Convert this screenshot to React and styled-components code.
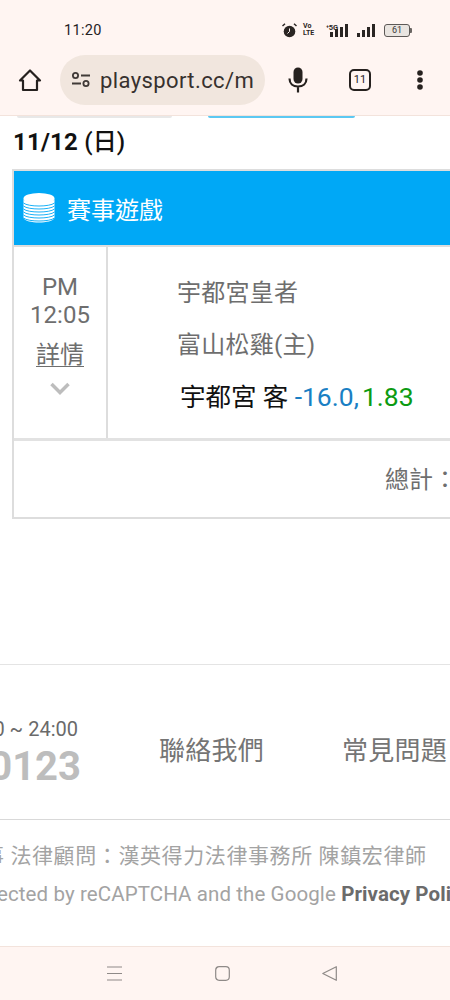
import React from "react"
import styled, { createGlobalStyle } from "styled-components"

const GlobalStyle = createGlobalStyle`
  html, body {
    margin: 0;
    padding: 0;
    background: #fff;
  }
  body {
    font-family: Roboto, "Noto Sans CJK TC", sans-serif;
  }
  * {
    box-sizing: border-box;
  }
`

const Screen = styled.div`
  width: 450px;
  height: 1000px;
  overflow: hidden;
  display: flex;
  flex-direction: column;
`

const Chrome = styled.header`
  height: 116px;
  flex: none;
  background: #fff5f2;
  border-bottom: 1px solid #f3e3dc;
`

const StatusBar = styled.div`
  height: 55px;
  padding: 21px 38px 0 64px;
  display: flex;
  align-items: flex-start;
  justify-content: space-between;
`

const Clock = styled.span`
  margin-top: 1px;
  font-size: 14.5px;
  line-height: 18px;
  letter-spacing: 0.3px;
  color: #26211f;
`

const StatusIcons = styled.div`
  display: flex;
  align-items: center;
  height: 18px;
  color: #2a2523;
`

const VoLte = styled.span`
  width: 16px;
  margin: 0 7px 0 6px;
  font-size: 7px;
  line-height: 7px;
  font-weight: 700;
  color: #2a2523;
`

const NetworkGroup = styled.div`
  position: relative;
  width: 24px;
  height: 13px;
  display: flex;
  justify-content: flex-end;
`

const FiveG = styled.span`
  position: absolute;
  left: 0;
  top: 0;
  font-size: 7.5px;
  font-weight: 700;
  line-height: 7px;
  letter-spacing: -0.2px;
`

const MobileBars = styled.span`
  margin-left: 7px;
  display: flex;
`

const Battery = styled.span`
  width: 26px;
  height: 13px;
  margin-left: 7px;
  border: 1px solid #5d5856;
  border-radius: 3px;
  background: #e9e4e0;
  color: #3c3735;
  font-size: 9px;
  line-height: 11px;
  text-align: center;
`

const BatteryTip = styled.span`
  width: 2px;
  height: 5px;
  background: #6b6663;
  border-radius: 0 1px 1px 0;
`

const Toolbar = styled.div`
  height: 50px;
  padding-left: 18px;
  display: flex;
  align-items: center;
`

const AddressPill = styled.div`
  width: 205px;
  height: 50px;
  margin-left: 18px;
  padding-left: 11px;
  border-radius: 25px;
  background: #f1e6de;
  display: flex;
  align-items: center;
  gap: 9px;
  overflow: hidden;
`

const AddressText = styled.span`
  font-size: 22px;
  letter-spacing: 0.4px;
  color: #37312e;
  white-space: nowrap;
`

const ToolButton = styled.div`
  flex: none;
  display: flex;
  align-items: center;
  justify-content: center;
  margin-left: ${(props) => props.$gap}px;
`

const TabCount = styled.span`
  width: 22px;
  height: 22px;
  border: 2px solid #26211f;
  border-radius: 5px;
  font-size: 11px;
  line-height: 18px;
  text-align: center;
  color: #26211f;
`

const Content = styled.main`
  flex: 1;
  min-height: 0;
  overflow: hidden;
`

const PageTabs = styled.div`
  height: 2px;
  display: flex;
`

const PageTab = styled.span`
  width: ${(props) => props.$width}px;
  margin-left: ${(props) => props.$left}px;
  height: 2px;
  background: ${(props) => props.$color};
  border-radius: 0 0 8px 8px;
`

const DateTitle = styled.h2`
  margin: 10px 0 0 13px;
  font-size: 24px;
  line-height: 28px;
  font-weight: 700;
  letter-spacing: 0.2px;
  color: #111;
`

const DayName = styled.span`
  font-weight: 500;
`

const GameTable = styled.section`
  width: 640px;
  margin: 13px 0 0 12px;
  border: 2px solid #ddd;
`

const TableHeader = styled.div`
  height: 76px;
  padding-left: 9px;
  background: #00a8f6;
  border-bottom: 2px solid #ddd;
  display: flex;
  align-items: center;
  gap: 12px;
  color: #fff;
  font-size: 24px;
`

const GameRow = styled.div`
  height: 194px;
  display: flex;
  border-bottom: 3px solid #e2e2e2;
`

const TimeCell = styled.div`
  width: 94px;
  flex: none;
  padding-top: 26px;
  border-right: 2px solid #ddd;
  display: flex;
  flex-direction: column;
  align-items: center;
  color: #6e6e6e;
  font-size: 24px;
  line-height: 28px;
`

const DetailLink = styled.a`
  margin-top: 12px;
  font-size: 24px;
  line-height: 29px;
  text-decoration: underline;
  text-underline-offset: 3px;
  text-decoration-thickness: 1px;
  color: #6e6e6e;
`

const Chevron = styled.svg`
  margin-top: 12px;
`

const MatchCell = styled.div`
  padding: 27px 0 0 69px;
`

const TeamName = styled.div`
  height: 52px;
  font-size: 24px;
  line-height: 38px;
  letter-spacing: 0.25px;
  color: #6e6e6e;
`

const BetLine = styled.div`
  margin: 0 0 0 3px;
  font-size: 25.5px;
  line-height: 38px;
  color: #111;
  white-space: nowrap;
`

const Spread = styled.span`
  font-size: 26.5px;
  color: #1a7fc4;
`

const Odds = styled.span`
  margin-left: 3px;
  font-size: 26.5px;
  color: #0c9b12;
`

const TotalRow = styled.div`
  height: 76px;
  padding: 21px 0 0 371px;
  font-size: 24px;
  line-height: 36px;
  color: #6e6e6e;
  white-space: nowrap;
`

const Footer = styled.footer`
  margin-top: 145px;
  border-top: 1px solid #e4e4e4;
`

const ContactRow = styled.div`
  height: 155px;
  padding-top: 12px;
  border-bottom: 1px solid #d9d9d9;
  display: flex;
  align-items: center;
  white-space: nowrap;
`

const ServiceHours = styled.div`
  width: 81px;
  flex: none;
  margin-top: 10px;
  display: flex;
  flex-direction: column;
  align-items: flex-end;
  gap: 4px;
`

const HoursText = styled.span`
  margin-right: 3px;
  font-size: 20px;
  line-height: 24px;
  color: #6a6a6a;
`

const PhoneText = styled.span`
  font-size: 40px;
  line-height: 44px;
  font-weight: 700;
  color: #bdbdbd;
`

const FooterLink = styled.a`
  margin-left: ${(props) => props.$gap}px;
  flex: none;
  font-size: 26px;
  letter-spacing: 0.25px;
  color: #757575;
`

const LegalLine = styled.p`
  margin: ${(props) => props.$top}px 0 0 ${(props) => props.$left}px;
  font-size: 21px;
  line-height: 26px;
  letter-spacing: 0.6px;
  color: #a3a3a3;
  white-space: nowrap;
`

const RecaptchaLine = styled(LegalLine)`
  font-size: 20.5px;
  letter-spacing: 0.1px;
`

const PolicyLink = styled.strong`
  color: #6b6b6b;
  font-weight: 700;
`

const NavBar = styled.nav`
  height: 54px;
  flex: none;
  padding-right: 6px;
  background: #fff5f2;
  border-top: 1px solid #f3e3dc;
  display: flex;
  align-items: center;
  justify-content: center;
  gap: 92.5px;
`

const HomeIcon = () => (
  <svg width="24" height="24" viewBox="0 0 24 24" fill="none" stroke="#26211f" strokeWidth="2.2" strokeLinejoin="round">
    <path d="M12 2.5 2 12.5H5V22H19V12.5H22Z" />
  </svg>
)

const TuneIcon = () => (
  <svg width="20" height="18" viewBox="0 0 20 18" fill="none" stroke="#403a37" strokeWidth="1.8">
    <circle cx="4.5" cy="4.5" r="2.6" />
    <path d="M10 4.5H19" />
    <path d="M1 12.5H10" />
    <circle cx="15" cy="12.5" r="2.6" />
  </svg>
)

const MicIcon = () => (
  <svg width="20" height="26" viewBox="0 0 20 26" fill="none">
    <rect x="5.5" y="0.5" width="9" height="16" rx="4.5" fill="#26211f" />
    <path d="M1.5 11.5C1.5 16.5 5 19.5 10 19.5S18.5 16.5 18.5 11.5M10 19.5V25.5" stroke="#26211f" strokeWidth="2.2" />
  </svg>
)

const MoreIcon = () => (
  <svg width="6" height="20" viewBox="0 0 6 20" fill="#26211f">
    <circle cx="3" cy="3" r="2.8" />
    <circle cx="3" cy="10" r="2.8" />
    <circle cx="3" cy="17" r="2.8" />
  </svg>
)

const AlarmIcon = () => (
  <svg width="15" height="15" viewBox="0 0 15 15" fill="#2a2523">
    <circle cx="7.5" cy="8.5" r="5.8" />
    <path d="M7.5 5.5V8.5L5.5 10.5" stroke="#fff5f2" strokeWidth="1" fill="none" />
    <path d="M0.5 3 3 0.8M14.5 3 12 0.8" stroke="#2a2523" strokeWidth="1.5" />
  </svg>
)

const SignalBars = ({ heights, step }) => (
  <svg width={heights.length * step} height="13" viewBox={`0 0 ${heights.length * step} 13`} fill="#2a2523">
    {heights.map((h, i) => (
      <rect key={i} x={i * step} y={13 - h} width="3" height={h} />
    ))}
  </svg>
)

const CoinStack = () => (
  <svg width="32" height="30" viewBox="0 0 32 30" fill="#fff">
    <ellipse cx="16" cy="5.5" rx="15.5" ry="5.5" />
    <path d="M0.5 6C3 11 29 11 31.5 6V25C29 31 3 31 0.5 25Z" />
    <g fill="none" stroke="#00a8f6" strokeWidth="0.9">
      {[10, 13, 16, 19, 22, 25].map((y) => (
        <path key={y} d={`M0.5 ${y}C5 ${y + 4} 27 ${y + 4} 31.5 ${y}`} />
      ))}
    </g>
  </svg>
)

const MenuNavIcon = () => (
  <svg width="15" height="15" viewBox="0 0 15 15" stroke="#8f8a88" strokeWidth="1.2">
    <path d="M0 1H15M0 7.5H15M0 14H15" />
  </svg>
)

const SquareNavIcon = () => (
  <svg width="15" height="15" viewBox="0 0 15 15" fill="none" stroke="#8f8a88" strokeWidth="1.2">
    <rect x="0.7" y="0.7" width="13.6" height="13.6" rx="3.5" />
  </svg>
)

const BackNavIcon = () => (
  <svg width="15" height="15" viewBox="0 0 15 15" fill="none" stroke="#8f8a88" strokeWidth="1.2" strokeLinejoin="round">
    <path d="M14.3 0.7V14.3L0.8 7.5Z" />
  </svg>
)

export default function App() {
  return (
    <>
      <GlobalStyle />
      <Screen>
        <Chrome>
          <StatusBar>
            <Clock>11:20</Clock>
            <StatusIcons>
              <AlarmIcon />
              <VoLte>Vo LTE</VoLte>
              <NetworkGroup>
                <FiveG>⁺5G</FiveG>
                <SignalBars heights={[5, 8, 10, 13]} step={5} />
              </NetworkGroup>
              <MobileBars>
                <SignalBars heights={[4, 7, 10, 13]} step={5} />
              </MobileBars>
              <Battery>61</Battery>
              <BatteryTip />
            </StatusIcons>
          </StatusBar>
          <Toolbar>
            <HomeIcon />
            <AddressPill>
              <TuneIcon />
              <AddressText>playsport.cc/m</AddressText>
            </AddressPill>
            <ToolButton $gap={23}><MicIcon /></ToolButton>
            <ToolButton $gap={41}><TabCount>11</TabCount></ToolButton>
            <ToolButton $gap={46}><MoreIcon /></ToolButton>
          </Toolbar>
        </Chrome>
        <Content>
          <PageTabs>
            <PageTab $left={17} $width={155} $color="#e8e8e8" />
            <PageTab $left={36} $width={147} $color="#5cc8f2" />
          </PageTabs>
          <DateTitle>11/12 <DayName>(日)</DayName></DateTitle>
          <GameTable>
            <TableHeader>
              <CoinStack />
              賽事遊戲
            </TableHeader>
            <GameRow>
              <TimeCell>
                <span>PM</span>
                <span>12:05</span>
                <DetailLink>詳情</DetailLink>
                <Chevron width="20" height="14" viewBox="0 0 20 14" fill="none" stroke="#bdbdbd" strokeWidth="3.5">
                  <path d="M1.5 2 10 10.5 18.5 2" />
                </Chevron>
              </TimeCell>
              <MatchCell>
                <TeamName>宇都宮皇者</TeamName>
                <TeamName>富山松雞(主)</TeamName>
                <BetLine>
                  宇都宮 客 <Spread>-16.0,</Spread><Odds>1.83</Odds>
                </BetLine>
              </MatchCell>
            </GameRow>
            <TotalRow>總計：</TotalRow>
          </GameTable>
          <Footer>
            <ContactRow>
              <ServiceHours>
                <HoursText>0 ~ 24:00</HoursText>
                <PhoneText>0123</PhoneText>
              </ServiceHours>
              <FooterLink $gap={78}>聯絡我們</FooterLink>
              <FooterLink $gap={78}>常見問題</FooterLink>
            </ContactRow>
            <LegalLine $top={23} $left={-17}>事 法律顧問：漢英得力法律事務所 陳鎮宏律師</LegalLine>
            <RecaptchaLine $top={12} $left={-3}>
              ected by reCAPTCHA and the Google <PolicyLink>Privacy Policy</PolicyLink>
            </RecaptchaLine>
          </Footer>
        </Content>
        <NavBar>
          <MenuNavIcon />
          <SquareNavIcon />
          <BackNavIcon />
        </NavBar>
      </Screen>
    </>
  )
}
